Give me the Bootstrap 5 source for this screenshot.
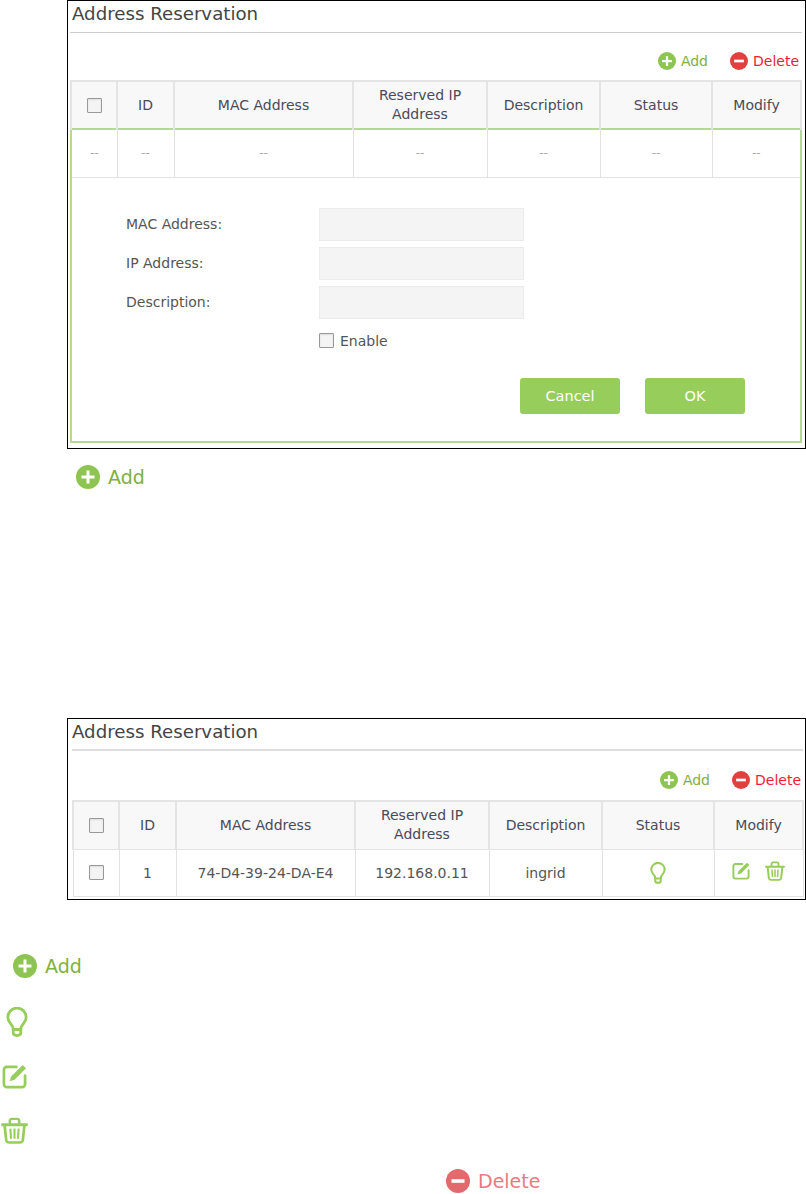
<!doctype html>
<html lang="en"><head><meta charset="utf-8"><title>Address Reservation</title>
<link rel="stylesheet" href="https://cdn.jsdelivr.net/npm/bootstrap@5.3.0/dist/css/bootstrap.min.css">
<style>
body{margin:0;background:#fff;font-family:"DejaVu Sans",sans-serif;font-size:14px;color:#555;overflow:hidden}
.doc-panel{margin-left:67px;width:739px;border:1px solid #000;padding:0 3px 0 2px;background:#fff}
.panel-a{height:449px}
.panel-b{height:182px;margin-top:229px;padding-left:4px;padding-right:2px}
.panel-title{font-size:18.2px;line-height:26px;color:#444;height:32px;margin:0;font-weight:400;padding-left:2px;border-bottom:1px solid #ccc}
.panel-b .panel-title{border-bottom:2px solid #ddd;padding-left:0}
.tool-row{height:47px;padding-right:3px;gap:22px;padding-top:9px}
.panel-b .tool-row{height:49px;padding-top:9px;padding-right:2px}
.tool{display:inline-flex;align-items:center;gap:5px;font-size:14px;line-height:18px}
.tool-add{color:#7fb040}.tool-del{color:#ee1c3a}
.tool svg{width:18px;height:18px}
.res-table{table-layout:fixed;width:730px;margin:0;border-collapse:collapse;--bs-table-bg:transparent}
.res-table th,.res-table td{border:1px solid #e2e2e2;padding:0 2px;text-align:center;vertical-align:middle;font-size:14px;line-height:18px;font-weight:400;color:#555;box-shadow:none}
.res-table thead th{height:48px;background:#f8f8f8;color:#4a4a5a;line-height:19px;border-width:2px 2px 1px 2px;border-color:#e4e4e4}
.res-table tbody td{height:48px}
.panel-b .res-table tbody td{height:47px}
.res-table tbody td.dash{color:#aaa;font-size:12px}
.green-row td{border-top:2px solid #b5d990!important}
.green-row td:first-child{border-left:2px solid #b5d990}
.green-row td:last-child{border-right:2px solid #b5d990}
.res-table td.form-cell{height:265px;padding:0;border:2px solid #b5d990;border-top:1px solid #e2e2e2;text-align:left;vertical-align:top}
.c1{width:46px}.c2{width:57px}.c3{width:179px}.c4{width:134px}.c5{width:113px}.c6{width:112px}.c7{width:89px}
.form-wrap{padding:30px 0 0 54px}
.form-line{display:flex;align-items:center;height:33px;margin-bottom:6px}
.form-line label{width:193px;color:#555;margin:0;font-size:14px}
.ghost-input{width:205px;height:33px;background:#f4f4f4;border:1px solid #ebebeb;border-radius:0;padding:0}
.enable-line{display:flex;align-items:center;gap:6px;padding-left:193px;height:22px;margin-top:11px}
.tick[type=checkbox]{width:15px;height:15px;margin:0;border:1px solid #999;border-radius:1px;background:#f4f4f4;flex:none;float:none;box-shadow:inset 0 1px 2px #ddd}
.btn-line{display:flex;gap:25px;padding-left:394px;margin-top:26px}
.btn-green{width:100px;height:36px;padding:0;background:#97cd5a;border:0;border-radius:3px;color:#fff;font-size:14.5px;line-height:36px}
.big-tool{display:flex;align-items:center;gap:8px;font-size:19px;line-height:24px;height:24px}
.big-tool svg{width:24px;height:24px}
.add-one{margin:16px 0 0 76px;color:#7fb040}
.add-two{margin:54px 0 0 13px;color:#7fb040}
.ico{display:block;color:#97cd5a}
.ico-bulb{margin:29px 0 0 6px;width:22px;height:30px}
.ico-edit{margin:27px 0 0 2px;width:25px;height:25px}
.ico-trash{margin:28px 0 0 1px;width:27px;height:27px}
.del-faded{margin:25px 0 0 446px;color:#ea7a80}
.inline-ico{width:16px;height:22px;vertical-align:middle;color:#97cd5a}
.tool-ico-a{width:18px;height:18px;color:#97cd5a}
.tool-ico-b{width:20px;height:20px;color:#97cd5a}
.mod-gap{gap:15px}
</style></head><body>
<svg width="0" height="0" class="d-block" aria-hidden="true"><defs>
<symbol id="i-add" viewBox="0 0 24 24"><circle cx="12" cy="12" r="12" fill="#8dc452"/><path d="M12 5.500v13M5.500 12h13" stroke="#fff" stroke-width="3" fill="none"/></symbol>
<symbol id="i-del" viewBox="0 0 24 24"><circle cx="12" cy="12" r="12" fill="#e23f3f"/><path d="M5.500 12h13" stroke="#fff" stroke-width="3.600" fill="none"/></symbol>
<symbol id="i-del2" viewBox="0 0 24 24"><circle cx="12" cy="12" r="12" fill="#e26a6d"/><path d="M5.500 12h13" stroke="#fff" stroke-width="3.600" fill="none"/></symbol>
<symbol id="i-bulb" viewBox="0 0 22 30"><path d="M7 22.500v-2C6.300 17.500 1.800 15.500 1.800 10.300a9.200 9.200 0 0 1 18.400 0c0 5.200-4.500 7.200-5.200 10.200v2zM7.200 23v2.500c0 1.500 1.300 3 3.800 3s3.800-1.500 3.800-3V23" fill="none" stroke="currentColor" stroke-width="2.800" stroke-linecap="round" stroke-linejoin="round"/></symbol>
<symbol id="i-edit" viewBox="0 0 26 26"><path d="M15 3H5a3 3 0 0 0-3 3v15a3 3 0 0 0 3 3h16a3 3 0 0 0 3-3V12" fill="none" stroke="currentColor" stroke-width="2.800" stroke-linecap="round"/><path d="M21.500 1l3.500 3.500L13 16.500l-5 1.500 1.500-5z" fill="currentColor"/></symbol>
<symbol id="i-trash" viewBox="0 0 26 28" preserveAspectRatio="none"><path d="M1.500 8h23" fill="none" stroke="currentColor" stroke-width="3" stroke-linecap="round"/><path d="M8.500 7V4A2 2 0 0 1 10.500 2h5A2 2 0 0 1 17.500 4V7" fill="none" stroke="currentColor" stroke-width="2.400"/><path d="M3.500 9l1.500 15a3 3 0 0 0 3 2.500h10a3 3 0 0 0 3-2.500L22.500 9" fill="none" stroke="currentColor" stroke-width="2.600" stroke-linecap="round"/><path d="M9 12l.7 10.500M13 12v10.500M17 12l-.7 10.500" fill="none" stroke="currentColor" stroke-width="2"/></symbol>
</defs></svg>

<section class="doc-panel panel-a">
  <h2 class="panel-title">Address Reservation</h2>
  <div class="tool-row d-flex justify-content-end align-items-center">
    <span class="tool tool-add"><svg><use href="#i-add"/></svg>Add</span>
    <span class="tool tool-del"><svg><use href="#i-del"/></svg>Delete</span>
  </div>
  <table class="table res-table">
    <colgroup><col class="c1"><col class="c2"><col class="c3"><col class="c4"><col class="c5"><col class="c6"><col class="c7"></colgroup>
    <thead><tr><th><input class="form-check-input tick d-block mx-auto" type="checkbox" aria-label="Select all"></th><th>ID</th><th>MAC Address</th><th>Reserved IP<br>Address</th><th>Description</th><th>Status</th><th>Modify</th></tr></thead>
    <tbody>
      <tr class="green-row"><td class="dash">--</td><td class="dash">--</td><td class="dash">--</td><td class="dash">--</td><td class="dash">--</td><td class="dash">--</td><td class="dash">--</td></tr>
      <tr><td colspan="7" class="form-cell"><div class="form-wrap">
        <div class="form-line"><label>MAC Address:</label><div class="ghost-input"></div></div>
        <div class="form-line"><label>IP Address:</label><div class="ghost-input"></div></div>
        <div class="form-line"><label>Description:</label><div class="ghost-input"></div></div>
        <div class="enable-line"><input class="form-check-input tick" type="checkbox" aria-label="Enable"><span>Enable</span></div>
        <div class="btn-line"><button type="button" class="btn btn-green">Cancel</button><button type="button" class="btn btn-green">OK</button></div>
      </div></td></tr>
    </tbody>
  </table>
</section>

<div class="big-tool add-one"><svg><use href="#i-add"/></svg>Add</div>

<section class="doc-panel panel-b">
  <h2 class="panel-title">Address Reservation</h2>
  <div class="tool-row d-flex justify-content-end align-items-center">
    <span class="tool tool-add"><svg><use href="#i-add"/></svg>Add</span>
    <span class="tool tool-del"><svg><use href="#i-del"/></svg>Delete</span>
  </div>
  <table class="table res-table">
    <colgroup><col class="c1"><col class="c2"><col class="c3"><col class="c4"><col class="c5"><col class="c6"><col class="c7"></colgroup>
    <thead><tr><th><input class="form-check-input tick d-block mx-auto" type="checkbox" aria-label="Select all"></th><th>ID</th><th>MAC Address</th><th>Reserved IP<br>Address</th><th>Description</th><th>Status</th><th>Modify</th></tr></thead>
    <tbody><tr><td><input class="form-check-input tick d-block mx-auto" type="checkbox" aria-label="Select row"></td><td>1</td><td>74-D4-39-24-DA-E4</td><td>192.168.0.11</td><td>ingrid</td><td><svg class="inline-ico"><use href="#i-bulb"/></svg></td><td><span class="d-inline-flex mod-gap align-items-center"><svg class="tool-ico-a"><use href="#i-edit"/></svg><svg class="tool-ico-b"><use href="#i-trash"/></svg></span></td></tr></tbody>
  </table>
</section>

<div class="big-tool add-two"><svg><use href="#i-add"/></svg>Add</div>
<svg class="ico ico-bulb"><use href="#i-bulb"/></svg>
<svg class="ico ico-edit"><use href="#i-edit"/></svg>
<svg class="ico ico-trash"><use href="#i-trash"/></svg>
<div class="big-tool del-faded"><svg><use href="#i-del2"/></svg>Delete</div>
<script src="https://cdn.jsdelivr.net/npm/bootstrap@5.3.0/dist/js/bootstrap.bundle.min.js"></script>
</body></html>
